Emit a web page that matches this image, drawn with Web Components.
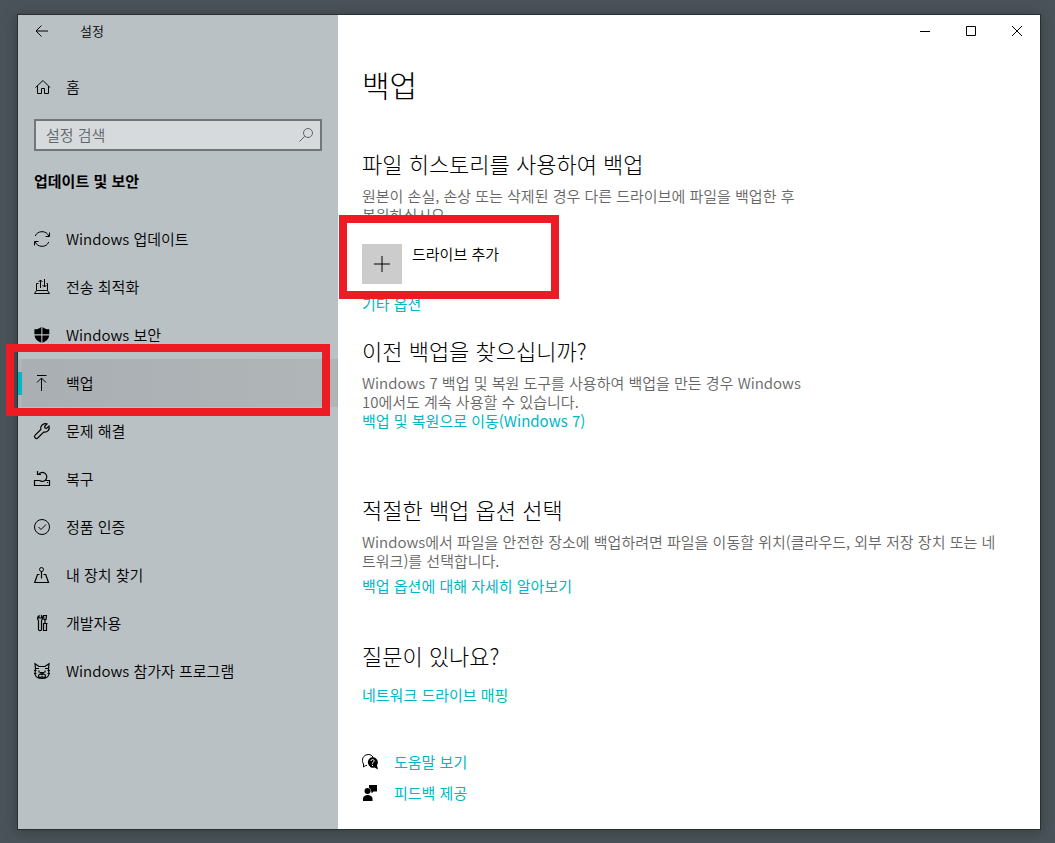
<!DOCTYPE html>
<html lang="ko">
<head>
<meta charset="utf-8">
<title>설정</title>
<style>
    body {
        margin: 0;
        font-family: "Noto Sans CJK KR", "Noto Sans", sans-serif;
        font-size: 15px;
        font-weight: 350;
        line-height: 19px;
        color: #000;
        background: #4a535a;
    }
</style>
</head>
<body>
<settings-window>
    <settings-sidebar slot="side" label="설정" category="업데이트 및 보안">
        <nav-item icon="update">Windows 업데이트</nav-item>
        <nav-item icon="delivery">전송 최적화</nav-item>
        <nav-item icon="shield">Windows 보안</nav-item>
        <nav-item icon="backup" active>백업</nav-item>
        <nav-item icon="wrench">문제 해결</nav-item>
        <nav-item icon="recovery">복구</nav-item>
        <nav-item icon="check">정품 인증</nav-item>
        <nav-item icon="find">내 장치 찾기</nav-item>
        <nav-item icon="developer">개발자용</nav-item>
        <nav-item icon="insider">Windows 참가자 프로그램</nav-item>
    </settings-sidebar>
    <backup-page></backup-page>
</settings-window>

<script>
const icons = {
    back: '<path d="M2 8H14M7.500 2.500L2 8l5.500 5.500"/>',
    home: '<path d="M1.500 8.500L9 1.500 16 8.500M3.500 7V14.500H7.500V9.500H10.500V14.500H14.500V7"/>',
    search: '<circle cx="10" cy="6" r="4.500"/><path d="M6.800 9.200L1.500 14.500"/>',
    update: '<path d="M1.200 5A7.500 7.500 0 0 1 14.800 5M15.500 1.500V5.500H11.500M14.800 11A7.500 7.500 0 0 1 1.200 11M.5 14.500V10.500H4.500"/>',
    delivery: '<path d="M4.500 4.500H2.500V11.500H13.500V4.500H12.500M2.500 11.500L.5 14.500H15.500L13.500 11.500M6.500 9V1M4.500 3L6.500 1l2 2M10.500 0V8M8.500 6l2 2 2-2"/>',
    shield: '<path fill="currentColor" stroke="none" d="M7.300 0V7.300H.4V2.300C3 2.400 5.400 1.500 7.300 0ZM8.400 0C10.300 1.500 12.700 2.400 15.300 2.300V7.300H8.400ZM.5 8.400H7.300V15.700C3.500 14.200 1 12 .5 8.400ZM8.400 8.400H15.200C14.700 12 12.200 14.200 8.400 15.700Z"/>',
    backup: '<path d="M3 .5H12.500M7.500 3V16M3 7.500L7.500 3 12 7.500"/>',
    wrench: '<path stroke-width="1.200" d="M1 12.300L6.800 6.500C6 3.500 8.300.4 11.800.6L13 1 10.600 3.500 11 5 12.500 5.400 15 3C16.200 6.500 13.300 9.800 9.700 9.100L3.700 15C2 16.500-.6 14 1 12.300Z"/>',
    recovery: '<path stroke-width="1.200" d="M5.500 9.500H.5V14.500H15.500V9.500H11.500M4.500 3.500A4.500 4.500 0 1 1 5.500 9.500M3.500 0V3.500H7M13 11.500h1"/>',
    check: '<circle cx="8" cy="8" r="7.500"/><path d="M4.500 8L7 10.500 12 5.500"/>',
    find: '<circle cx="7.500" cy="2.500" r="2"/><path stroke-width="1.200" d="M7.500 4.500V11.500M5.500 7.500H3.500L.7 15.500H14.500L11.700 7.500H9.500"/>',
    developer: '<path stroke-width="1.200" d="M4.500 5.500V14.500C4.500 16 7.500 16 7.500 14.500V5.500C9 4 8.500 1.500 7.500.7V3H5V.7C3.500 1.500 3 4 4.500 5.500ZM9.500.5H12.500L12 4.500H10ZM11 4.500V8M9 8.500H13.500M9.500 8.500V15.500H12.500V8.500"/>',
    insider: '<path stroke-width="1.200" d="M1.500 6L1 .7 5 3.500H11L15 .7 14.500 6M0 7.500H2.500M13.500 7.500H16M0 10.500H2.500M13.500 10.500H16M1.500 6L1 11C1.500 14 4 15.500 8 15.500S14.500 14 15 11L14.500 6M2 5.500H5M11 5.500H14M5 7.500V9.500M11 7.500V9.500M6.500 9.500H9.500L8 11.500ZM8 11.500C6 10.500 4.500 11.500 4.500 13S7 15 8 13.500C9 15 11.500 14.500 11.500 13S10 10.500 8 11.500"/>',
    add: '<path d="M8 0V16M0 8H16"/>',
    help: '<path d="M5 11.500H3.500L1.500 13V10C-.5 7 .3 2.500 4 1 7-.2 9.500.8 11 3"/><path fill="currentColor" stroke="none" d="M10.500 3A5.400 5.400 0 0 1 15 11.200L16 15.500 12.500 13.600A5.400 5.400 0 1 1 10.500 3Z"/><path stroke="#fff" d="M9 7C9 4.800 12.200 5 12 7 11.900 8.200 10.500 8.200 10.500 9.700M10.500 10.800V12"/>',
    feedback: '<path fill="currentColor" stroke="none" d="M7 0H15V6.500H11.500L9.500 8.500V6.500H8.500A3 3 0 0 0 7 2.800ZM1 16V13.500C1 8.700 10.500 8.700 10.500 13.500V16Z"/><circle cx="5.500" cy="6" r="3" fill="currentColor" stroke="none"/>',
    minimize: '<path d="M3 8.500H13"/>',
    maximize: '<path d="M3.500 3.500H12.500V12.500H3.500Z"/>',
    close: '<path d="M3 3L13 13M13 3L3 13"/>'
}

class AppIcon extends HTMLElement {
    constructor() {
        super()
        this.attachShadow({ mode: 'open' })
    }

    connectedCallback() {
        this.shadowRoot.innerHTML = `
            <style>
                :host { display: block; flex: none; width: 16px; height: 16px; }
                svg { display: block; overflow: visible; }
            </style>
            <svg width="16" height="16" viewBox="0 0 16 16" fill="none" stroke="currentColor" aria-hidden="true">
                ${icons[this.getAttribute('name')]}
            </svg>
        `
    }
}
window.customElements.define('app-icon', AppIcon)

// Red frame laid over the element that it points out
class MarkFrame extends HTMLElement {
    constructor() {
        super()
        this.attachShadow({ mode: 'open' })
        this.shadowRoot.innerHTML = `
            <style>
                :host {
                    position: absolute;
                    z-index: 5;
                    box-sizing: border-box;
                    border: 8px solid #ed1c24;
                    pointer-events: none;
                }
            </style>
        `
    }
}
window.customElements.define('mark-frame', MarkFrame)

class NavItem extends HTMLElement {
    constructor() {
        super()
        this.attachShadow({ mode: 'open' })
    }

    connectedCallback() {
        const active = this.hasAttribute('active')
        this.shadowRoot.innerHTML = `
            <style>
                :host { display: block; position: relative; }
                a {
                    display: flex;
                    align-items: center;
                    gap: 16px;
                    box-sizing: border-box;
                    height: 48px;
                    padding: 0 16px;
                    color: inherit;
                    text-decoration: none;
                }
                span { padding-bottom: 2px; }
                :host([active]) a {
                    background: linear-gradient(90deg, #a9afb2, #b0b5b8);
                    border: 1px solid #a6adb0;
                    border-left: 4px solid #00b7c3;
                    border-image: linear-gradient(transparent 25%, #00b7c3 25%, #00b7c3 75%, transparent 75%) 0 0 0 4;
                    padding-left: 12px;
                }
                mark-frame { inset: -15px 8px -9px -12px; }
            </style>
            <a href="#"${active ? ' aria-current="page"' : ''}>
                <app-icon name="${this.getAttribute('icon')}"></app-icon>
                <span><slot></slot></span>
            </a>
            ${active ? '<mark-frame></mark-frame>' : ''}
        `
    }
}
window.customElements.define('nav-item', NavItem)

class SettingsSidebar extends HTMLElement {
    constructor() {
        super()
        this.attachShadow({ mode: 'open' })
    }

    connectedCallback() {
        this.shadowRoot.innerHTML = `
            <style>
                :host { display: block; background: #b9c1c4; }
                header { display: flex; align-items: center; height: 32px; font-size: 13px; }
                button {
                    display: grid;
                    place-items: center;
                    width: 48px;
                    height: 32px;
                    padding: 0;
                    border: 0;
                    color: inherit;
                    background: none;
                }
                header span { margin-left: 14px; padding-bottom: 2px; }
                .home { display: block; margin-top: 16px; }
                .search {
                    display: flex;
                    align-items: center;
                    box-sizing: border-box;
                    height: 32px;
                    margin: 8px 16px 0;
                    padding: 0 6px 0 10px;
                    border: 2px solid #70767a;
                    background: #d6dadd;
                    color: #5f6568;
                }
                input {
                    flex: 1;
                    min-width: 0;
                    padding: 0 0 2px;
                    border: 0;
                    outline: 0;
                    background: none;
                    font: inherit;
                    color: #000;
                }
                input::placeholder { color: #5f6568; opacity: 1; }
                h2 { margin: 20px 16px 24px; font-size: 15px; line-height: 20px; font-weight: 700; }
            </style>
            <header>
                <button aria-label="뒤로"><app-icon name="back"></app-icon></button>
                <span>${this.getAttribute('label')}</span>
            </header>
            <nav-item class="home" icon="home">홈</nav-item>
            <label class="search">
                <input type="text" placeholder="설정 검색" aria-label="설정 검색">
                <app-icon name="search"></app-icon>
            </label>
            <h2>${this.getAttribute('category')}</h2>
            <nav><slot></slot></nav>
        `
    }
}
window.customElements.define('settings-sidebar', SettingsSidebar)

class SettingsSection extends HTMLElement {
    constructor() {
        super()
        this.attachShadow({ mode: 'open' })
    }

    connectedCallback() {
        this.shadowRoot.innerHTML = `
            <style>
                :host { display: block; }
                h2 { margin: 0 0 9px; font-size: 22px; line-height: 28px; font-weight: 300; }
            </style>
            <h2>${this.getAttribute('heading')}</h2>
            <slot></slot>
        `
    }
}
window.customElements.define('settings-section', SettingsSection)

const backupTemplate = document.createElement('template')
backupTemplate.innerHTML = `
    <style>
        :host { display: block; padding: 17px 32px 24px 24px; }
        h1 { margin: 0 0 45px; font-size: 30px; line-height: 40px; font-weight: 300; }
        p { margin: 0; color: #666; }
        .narrow { max-width: 450px; }
        a { color: #00b7c3; text-decoration: none; }
        .link { display: block; font-weight: 400; }
        .history { margin-bottom: 23px; }
        .previous { margin-bottom: 65px; }
        .options { margin-bottom: 46px; }
        .options .link { margin-top: 6px; }
        .question { margin-bottom: 48px; }
        .question .link { margin-top: 16px; }
        .add {
            display: flex;
            position: relative;
            align-items: flex-start;
            gap: 10px;
            width: fit-content;
            margin: 20px 0 10px;
            padding: 0;
            border: 0;
            background: none;
            color: inherit;
            font: inherit;
        }
        .plus {
            display: grid;
            place-items: center;
            width: 40px;
            height: 40px;
            background: #ccc;
        }
        mark-frame { top: -29px; bottom: -15px; left: -23px; width: 220px; }
        .support { display: grid; gap: 12px; font-weight: 400; }
        .support a { display: flex; align-items: center; gap: 16px; }
        .support app-icon { color: #000; }
    </style>
    <h1>백업</h1>
    <settings-section class="history" heading="파일 히스토리를 사용하여 백업">
        <p class="narrow">원본이 손실, 손상 또는 삭제된 경우 다른 드라이브에 파일을 백업한 후 복원하십시오.</p>
        <button class="add">
            <span class="plus"><app-icon name="add"></app-icon></span>
            <span>드라이브 추가</span>
            <mark-frame></mark-frame>
        </button>
        <a class="link" href="#">기타 옵션</a>
    </settings-section>
    <settings-section class="previous" heading="이전 백업을 찾으십니까?">
        <p class="narrow">Windows 7 백업 및 복원 도구를 사용하여 백업을 만든 경우 Windows 10에서도 계속 사용할 수 있습니다.</p>
        <a class="link" href="#">백업 및 복원으로 이동(Windows 7)</a>
    </settings-section>
    <settings-section class="options" heading="적절한 백업 옵션 선택">
        <p>Windows에서 파일을 안전한 장소에 백업하려면 파일을 이동할 위치(클라우드, 외부 저장 장치 또는 네트워크)를 선택합니다.</p>
        <a class="link" href="#">백업 옵션에 대해 자세히 알아보기</a>
    </settings-section>
    <settings-section class="question" heading="질문이 있나요?">
        <a class="link" href="#">네트워크 드라이브 매핑</a>
    </settings-section>
    <div class="support">
        <a href="#"><app-icon name="help"></app-icon>도움말 보기</a>
        <a href="#"><app-icon name="feedback"></app-icon>피드백 제공</a>
    </div>
`
class BackupPage extends HTMLElement {
    constructor() {
        super()
        this.attachShadow({ mode: 'open' })
        this.shadowRoot.appendChild(backupTemplate.content.cloneNode(true))
    }
}
window.customElements.define('backup-page', BackupPage)

const windowTemplate = document.createElement('template')
windowTemplate.innerHTML = `
    <style>
        :host {
            display: grid;
            box-sizing: border-box;
            min-height: 100vh;
            padding: 14px 14px 13px 17px;
        }
        .window {
            display: grid;
            grid-template-columns: 320px 1fr;
            border: 1px solid #2b2e30;
            background: #fff;
            box-shadow: 0 2px 12px rgba(40, 48, 44, .6);
        }
        .controls { display: flex; justify-content: flex-end; }
        button {
            display: grid;
            place-items: center;
            width: 46px;
            height: 32px;
            padding: 0;
            border: 0;
            background: none;
            color: #000;
        }
    </style>
    <div class="window">
        <slot name="side"></slot>
        <main>
            <div class="controls">
                <button aria-label="최소화"><app-icon name="minimize"></app-icon></button>
                <button aria-label="최대화"><app-icon name="maximize"></app-icon></button>
                <button aria-label="닫기"><app-icon name="close"></app-icon></button>
            </div>
            <slot></slot>
        </main>
    </div>
`
class SettingsWindow extends HTMLElement {
    constructor() {
        super()
        this.attachShadow({ mode: 'open' })
        this.shadowRoot.appendChild(windowTemplate.content.cloneNode(true))
    }
}
window.customElements.define('settings-window', SettingsWindow)
</script>
</body>
</html>
